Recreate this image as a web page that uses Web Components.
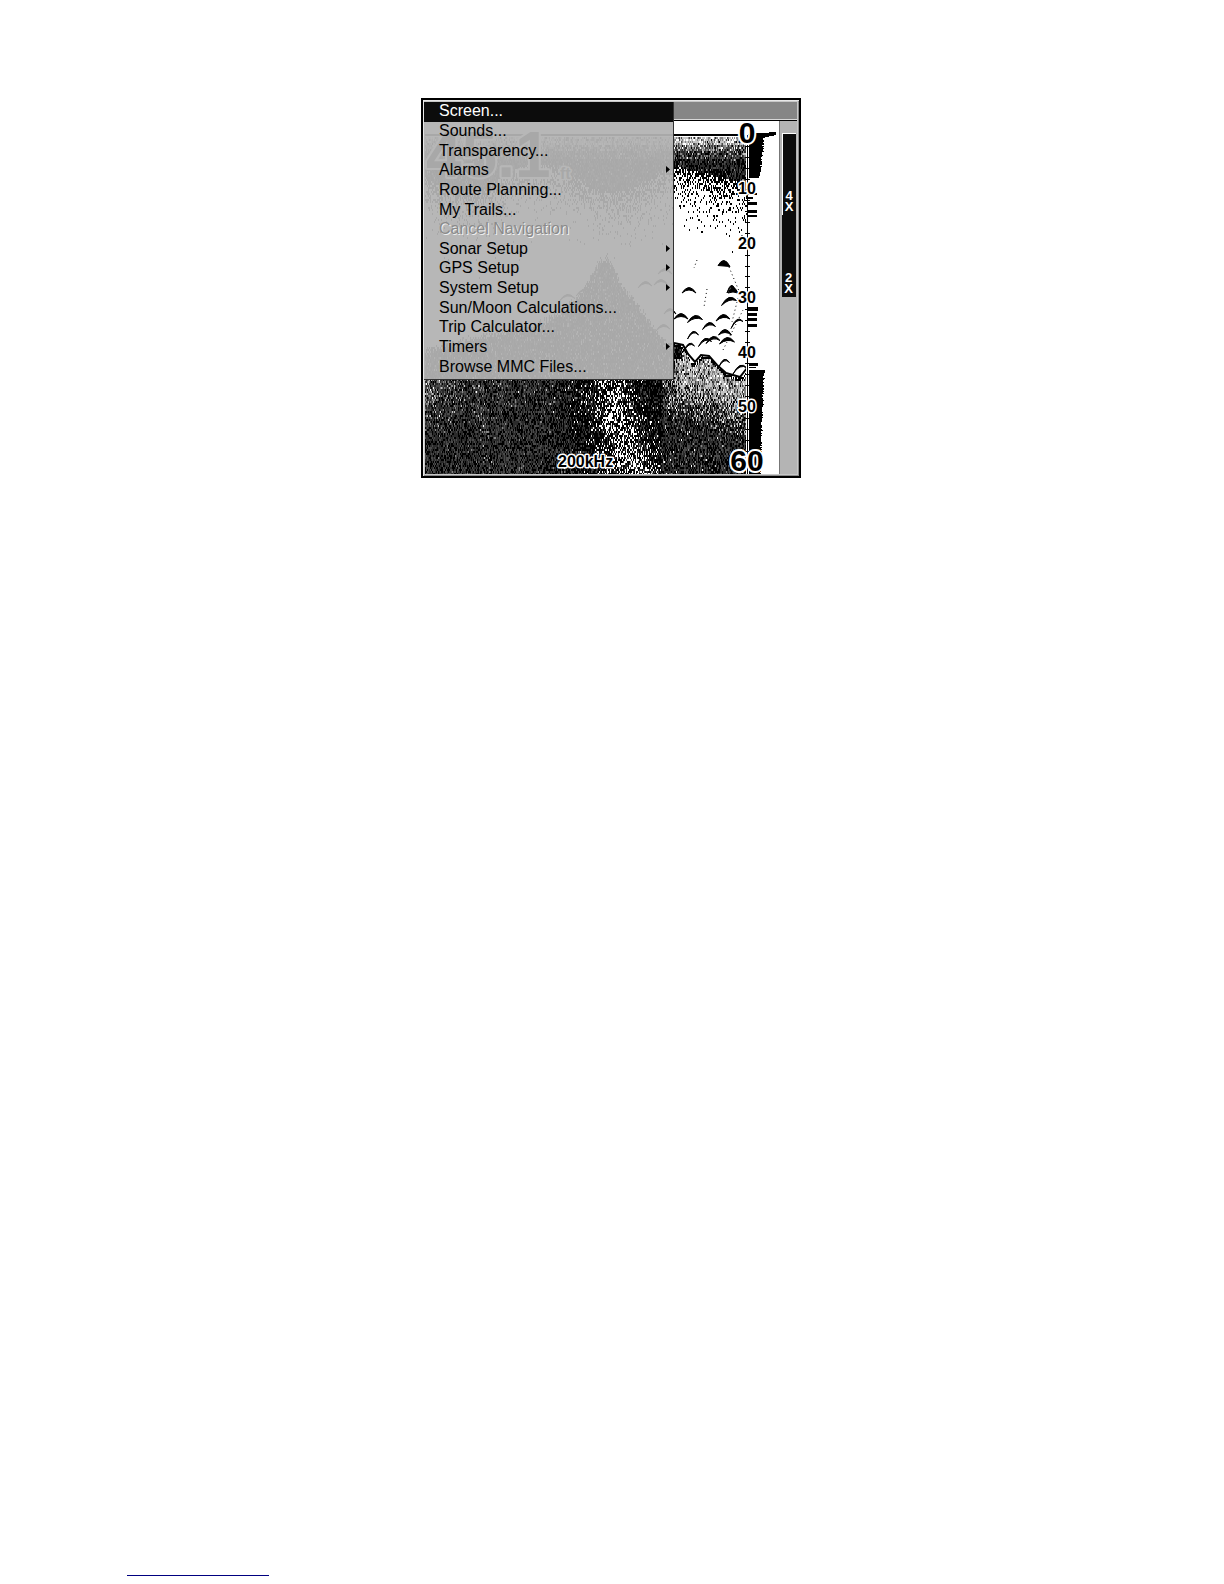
<!DOCTYPE html>
<html lang="en">
<head>
<meta charset="utf-8">
<title>Sonar menu</title>
<style>
  body {
    margin: 0;
    background: #fff;
    font-family: "Liberation Sans", Arial, sans-serif;
  }
</style>
</head>
<body>
<manual-page>
  <sonar-device>
    <sonar-chart slot="chart"></sonar-chart>
    <zoom-bar slot="zoom"></zoom-bar>
    <sonar-menu slot="menu">
      <menu-item selected>Screen...</menu-item>
      <menu-item>Sounds...</menu-item>
      <menu-item>Transparency...</menu-item>
      <menu-item submenu>Alarms</menu-item>
      <menu-item>Route Planning...</menu-item>
      <menu-item>My Trails...</menu-item>
      <menu-item disabled>Cancel Navigation</menu-item>
      <menu-item submenu>Sonar Setup</menu-item>
      <menu-item submenu>GPS Setup</menu-item>
      <menu-item submenu>System Setup</menu-item>
      <menu-item>Sun/Moon Calculations...</menu-item>
      <menu-item>Trip Calculator...</menu-item>
      <menu-item submenu>Timers</menu-item>
      <menu-item>Browse MMC Files...</menu-item>
    </sonar-menu>
  </sonar-device>
</manual-page>

<script>
const CHART_WIDTH = 354;
const CHART_HEIGHT = 353;
const AXIS_X = 322;
const SURFACE_Y = 14;
const PIXELS_PER_TEN = 54.4;
const SHADES = ['#000', '#2b2b2b', '#4a4a4a', '#858585', '#c4c4c4', '#fff'];

// bottom contour, x then y
const BOTTOM = [
  [0, 225], [40, 214], [75, 206], [110, 200], [135, 186], [155, 168], [166, 150], [174, 134],
  [182, 132], [188, 142], [195, 158], [210, 176], [225, 197], [240, 217], [249, 222],
  [258, 225], [266, 241], [271, 241], [277, 234], [284, 235], [291, 243], [299, 251],
  [312, 256], [317, 256], [323, 247]
];

// fish arches: centre x, centre y, width, thickness, slant
const ARCHES = [
  [264, 168, 14, 4, 0], [299, 141, 12, 10, 1], [256, 194, 14, 5, 0], [270, 196, 15, 5, -3],
  [298, 195, 14, 5, -2], [304, 178, 15, 5, -5], [306, 166, 8, 3, -4], [284, 203, 13, 4, -3],
  [268, 212, 11, 2, -4], [280, 219, 13, 3, -5], [288, 217, 14, 4, -3], [300, 210, 13, 5, 0],
  [302, 218, 15, 5, -2], [264, 224, 11, 2, -6], [299, 240, 11, 2, -5], [312, 200, 12, 2, -7],
  [315, 246, 14, 2, -6], [308, 168, 10, 8, 0], [220, 162, 14, 3, -2], [240, 149, 14, 3, 0],
  [236, 160, 14, 3, 0], [160, 169, 18, 2, -4], [142, 175, 16, 2, -3], [245, 189, 12, 3, 0],
  [238, 205, 14, 3, -2]
];

const createRandom = (seed) => () => {
  seed = (seed * 1664525 + 1013904223) >>> 0;
  return seed / 4294967296;
};

const getBottom = (x) => {
  for (let i = 1; i < BOTTOM.length; i++) {
    const [x0, y0] = BOTTOM[i - 1];
    const [x1, y1] = BOTTOM[i];
    if (x <= x1) return y0 + (y1 - y0) * (x - x0) / (x1 - x0);
  }
  return BOTTOM[BOTTOM.length - 1][1];
};

const pick = (value, weights) => {
  for (let i = 0; i < weights.length; i++) {
    value -= weights[i];
    if (value < 0) return i;
  }
  return 5;
};

const getShade = (x, y, random) => {
  const value = random();
  const bottom = getBottom(x) + (x < 249 ? random() * 8 : 0);
  if (y < bottom) {
    const edge = x > 249 ? 44 + (x - 249) * 0.24 : 56 + Math.sin(x / 24) * 14;
    if (y < 24) return pick(value, [0.03, 0.04, 0.09, 0.26, 0.42]);
    if (y < 30) return pick(value, [0.08, 0.14, 0.24, 0.34, 0.14]);
    if (y < 38) return pick(value, [0.2, 0.3, 0.28, 0.17, 0.04]);
    if (y < edge) return pick(value, [0.46, 0.36, 0.14, 0.03, 0.01]);
    return value < 0.66 * Math.exp(-(((y - edge) / 24) ** 1.4)) ? 0 : 5;
  }
  if (x > 249 && y < bottom + 3) return x > 256 && value > 0.85 ? 5 : 0;
  if (x < 249 && y < 257) return pick(value, [0.5, 0.3, 0.1, 0.05, 0.03]);

  // soft light layer right under the bottom on the right side
  if (x > 236) {
    const depth = y - 250 - (x - 249) * 0.3;
    if (x < 257 && y < 238) return pick(value, [0.7, 0.2, 0.1]);
    const light = Math.max(0, Math.min(1, 1.1 - depth / 44));
    if (random() < light * Math.min(1, 0.3 + (x - 236) / 34)) {
      return pick(value, [0.04, 0.05, 0.1, 0.32, 0.42]);
    }
    return pick(value, [0.4, 0.38, 0.18, 0.03, 0.005]);
  }

  // bright echo spreading downwards
  const centre = 184 + (y - 257) * 0.22;
  const spread = 16 + (y - 257) * 0.12;
  const bright = 0.42 * Math.exp(-(((x - centre) / spread) ** 2));
  if (random() < bright) return 5;
  if (x > 110 + random() * 50) return pick(value, [0.68, 0.22, 0.08, 0.01, 0.005]);

  const haze = Math.max(0, 0.7 - (y - 257) / 80) * Math.max(0.15, 1 - x / 60);
  const streak = Math.abs(x - 52 - (y - 257) * 0.12) < 6 ? 0.16 : 0;
  if (random() < haze + streak) return pick(value, [0.05, 0.1, 0.3, 0.4, 0.13]);
  return pick(value, [0.32, 0.42, 0.25, 0.01, 0]) % 5;
};

const renderNoise = () => {
  const random = createRandom(200);
  const paths = SHADES.map(() => '');
  for (let x = 0; x < AXIS_X; x++) {
    for (let y = 16; y < CHART_HEIGHT; y += 2) {
      const shade = getShade(x, y, random);
      if (shade < 5) paths[shade] += `M${x} ${y}h1v2h-1z`;
    }
  }
  return paths.map((d, i) => `<path fill="${SHADES[i]}" d="${d}"/>`).join('');
};

const renderArches = () => ARCHES.map(([x, y, w, t, slant]) => {
  const left = x - w / 2;
  const right = x + w / 2;
  return `<path d="M${left} ${y + 4 - slant / 2}Q${x} ${y - 7} ${right} ${y + 4 + slant / 2}Q${x} ${y - 6 + t} ${left} ${y + 4 - slant / 2}z" stroke="#000"/>`;
}).join('');

const renderEchoColumn = () => {
  const random = createRandom(50);
  let d = 'M323 13L351 11V14L338 17V20H323z';
  for (let y = 19; y < 57; y++) {
    d += `M323 ${y}h${Math.round(16 - (y - 19) * 0.13 + random() * 2 - 1)}v1H323z`;
  }
  for (const [y, h, w] of [[72, 2, 9], [76, 2, 5], [81, 3, 9], [89, 3, 9], [94, 2, 9],
    [186, 4, 10], [192, 3, 9], [197, 3, 9], [203, 3, 9], [242, 3, 10], [246, 1, 8]]) {
    d += `M323 ${y}h${w}v${h}H323z`;
  }
  for (let y = 249; y < CHART_HEIGHT; y++) {
    d += `M323 ${y}h${Math.round(16 - (y - 249) * 0.035 + random() * 2 - 1)}v1H323z`;
  }
  return `<path d="${d}"/>`;
};

const renderAxis = () => {
  let ticks = '';
  for (let i = 1; i < 30; i++) {
    const y = Math.round(SURFACE_Y + i * PIXELS_PER_TEN / 5);
    ticks += `M320 ${y}h5v1h-5z`;
  }
  const labels = [10, 20, 30, 40, 50].map((depth) =>
    `<text x="${AXIS_X}" y="${Math.round(SURFACE_Y + depth / 10 * PIXELS_PER_TEN + 5)}">${depth}</text>`
  ).join('');
  return `
    <g shape-rendering="crispEdges">
      <path d="M321 14h3v52h-3zM321 235h3v118h-3z" fill="#fff"/>
      <path d="M322 14h1v339h-1z"/>
      <path d="${ticks}"/>
    </g>
    <g class="depth">${labels}</g>
    <text class="limit" x="${AXIS_X}" y="22">0</text>
    <text class="limit" x="${AXIS_X}" y="350">60</text>
  `;
};

class ManualPage extends HTMLElement {
  constructor() {
    super();
    this.attachShadow({ mode: 'open' }).innerHTML = `
      <style>
        :host {
          display: flex;
          flex-direction: column;
          justify-content: space-between;
          box-sizing: border-box;
          min-height: 100vh;
          padding: 98px 129px 8px 127px;
        }
        main {
          display: flex;
          justify-content: center;
        }
        footer {
          width: 142px;
          border-bottom: 1px solid #000080;
        }
      </style>
      <main><slot></slot></main>
      <footer></footer>
    `;
  }
}

class SonarDevice extends HTMLElement {
  constructor() {
    super();
    this.attachShadow({ mode: 'open' }).innerHTML = `
      <style>
        :host {
          display: block;
          position: relative;
          box-sizing: border-box;
          width: 380px;
          max-width: 100%;
          border: 2px solid #000;
          padding: 1px;
          background: #8c8c8c;
          box-shadow: inset 1px 1px #e8e8e8;
        }
        .face {
          border: 1px solid #c8c8c8;
        }
        .title {
          height: 17px;
          border-bottom: 1px solid #d8d8d8;
          background: #868686;
        }
        .view {
          display: grid;
          grid-template-columns: minmax(0, 1fr) 18px;
          border-top: 1px solid #000;
        }
        ::slotted([slot="menu"]) {
          position: absolute;
          top: 2px;
          left: 1px;
        }
      </style>
      <div class="face">
        <div class="title"></div>
        <div class="view">
          <slot name="chart"></slot>
          <slot name="zoom"></slot>
        </div>
      </div>
      <slot name="menu"></slot>
    `;
  }
}

class SonarChart extends HTMLElement {
  constructor() {
    super();
    this.attachShadow({ mode: 'open' }).innerHTML = `
      <style>
        :host {
          display: block;
          background: #fff;
        }
        svg {
          display: block;
          width: 100%;
        }
        text {
          stroke: #fff;
          stroke-width: 3px;
          stroke-linejoin: round;
          paint-order: stroke;
          font-weight: bold;
          font-size: 16px;
        }
        .depth text, .limit {
          text-anchor: middle;
        }
        .limit {
          font-size: 30px;
          stroke-width: 4px;
        }
        .reading {
          font-size: 64px;
          stroke-width: 4px;
        }
      </style>
      <svg viewBox="0 0 ${CHART_WIDTH} ${CHART_HEIGHT}">
        <g shape-rendering="crispEdges">
          ${renderNoise()}
          <path d="M0 13h315v2h-315z"/>
        </g>
        ${renderArches()}
        <path d="M249 222l9 2 5 9 7 8 6-7 8 1 8 9 9 8 14 4 7-9" fill="none" stroke="#000" stroke-width="2"/>
        <g fill="none" stroke="#000" stroke-dasharray="1 3">
          <path d="M272 139l-3 8M282 168l-3 18M304 146l10 24M313 177l-6 24M298 229l20-40"/>
        </g>
        <g shape-rendering="crispEdges">${renderEchoColumn()}</g>
        <text class="reading" x="1" y="56">45.1</text>
        <text x="135" y="58">ft</text>
        <text x="133" y="346">200kHz</text>
        ${renderAxis()}
      </svg>
    `;
  }
}

class ZoomBar extends HTMLElement {
  constructor() {
    super();
    this.attachShadow({ mode: 'open' }).innerHTML = `
      <style>
        :host {
          display: flex;
          flex-direction: column;
          box-sizing: border-box;
          padding: 12px 1px 0 2px;
          border-left: 1px solid #777;
          background: #b4b4b4;
        }
        div {
          display: flex;
          flex-direction: column;
          justify-content: flex-end;
          align-items: center;
          box-sizing: border-box;
          height: 82px;
          padding: 0 1px 3px 0;
          background: #0c0c0c;
          color: #fff;
          font-size: 13px;
          font-weight: bold;
          line-height: 11px;
        }
        .near {
          border-top: 1px solid #fff;
          border-left: 1px solid #fff;
        }
      </style>
      <div class="near"><span>4</span><span>X</span></div>
      <div><span>2</span><span>X</span></div>
    `;
  }
}

class SonarMenu extends HTMLElement {
  constructor() {
    super();
    this.attachShadow({ mode: 'open' }).innerHTML = `
      <style>
        :host {
          display: grid;
          grid-auto-rows: 1fr;
          box-sizing: border-box;
          width: 250px;
          height: 278px;
          padding-bottom: 2px;
          border-right: 1px solid #333;
          border-bottom: 1px solid #333;
          background: rgba(178, 178, 178, 0.94);
        }
      </style>
      <slot></slot>
    `;
  }

  connectedCallback() {
    this.setAttribute('role', 'menu');
  }
}

class MenuItem extends HTMLElement {
  connectedCallback() {
    this.attachShadow({ mode: 'open' }).innerHTML = `
      <style>
        :host {
          display: grid;
        }
        button {
          display: flex;
          align-items: center;
          justify-content: space-between;
          min-width: 0;
          margin: 0;
          padding: 0 3px 2px 15px;
          border: 0;
          background: none;
          color: #000;
          font: inherit;
          font-size: 16px;
          line-height: 17px;
          text-align: left;
          white-space: nowrap;
        }
        button:disabled {
          color: #8a8a8a;
          text-shadow: 1px 1px #f0f0f0;
        }
        :host([selected]) button {
          background: #0c0c0c;
          color: #fff;
        }
        svg {
          width: 4px;
          height: 7px;
        }
      </style>
      <button type="button" role="menuitem">
        <span><slot></slot></span>
        ${this.hasAttribute('submenu') ? '<svg viewBox="0 0 4 7"><path d="M0 0L4 3.500L0 7z"/></svg>' : ''}
      </button>
    `;
    this.shadowRoot.querySelector('button').disabled = this.hasAttribute('disabled');
  }
}

customElements.define('manual-page', ManualPage);
customElements.define('sonar-device', SonarDevice);
customElements.define('sonar-chart', SonarChart);
customElements.define('zoom-bar', ZoomBar);
customElements.define('sonar-menu', SonarMenu);
customElements.define('menu-item', MenuItem);
</script>
</body>
</html>
